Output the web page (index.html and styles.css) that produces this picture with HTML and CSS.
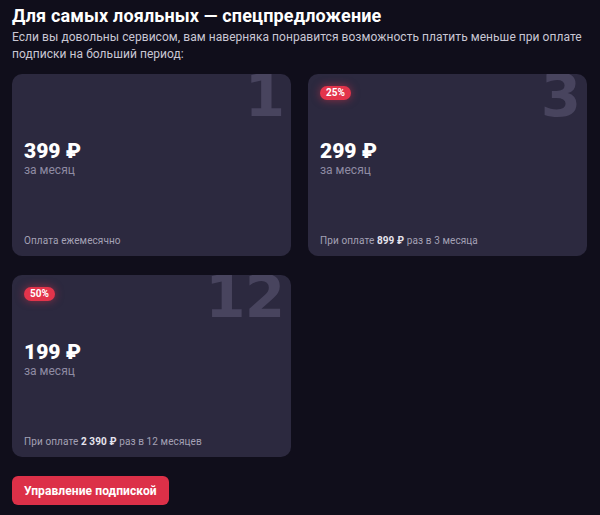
FILE: index.html
```html
<!DOCTYPE html>
<html lang="ru">
<head>
<meta charset="utf-8">
<link rel="stylesheet" href="styles.css">
</head>
<body>
<div class="page">
  <h1 class="title">Для самых лояльных — спецпредложение</h1>
  <p class="lead">Если вы довольны сервисом, вам наверняка понравится возможность платить меньше при оплате подписки на больший период:</p>
  <div class="plans">
    <div class="card">
      <div class="num">1</div>
      <div class="badge-row"></div>
      <div class="price">399 ₽</div>
      <div class="per">за месяц</div>
      <div class="foot">Оплата ежемесячно</div>
    </div>
    <div class="card">
      <div class="num">3</div>
      <div class="badge-row"><span class="badge">25%</span></div>
      <div class="price">299 ₽</div>
      <div class="per">за месяц</div>
      <div class="foot">При оплате <b>899 ₽</b> раз в 3 месяца</div>
    </div>
    <div class="card">
      <div class="num">12</div>
      <div class="badge-row"><span class="badge">50%</span></div>
      <div class="price">199 ₽</div>
      <div class="per">за месяц</div>
      <div class="foot">При оплате <b>2 390 ₽</b> раз в 12 месяцев</div>
    </div>
  </div>
  <button class="btn">Управление подпиской</button>
</div>
</body>
</html>
```
FILE: styles.css
```css
html, body {
  margin: 0;
  padding: 0;
  background: #100e1b;
}
body {
  font-family: Roboto, "Noto Sans", sans-serif;
  color: #ffffff;
}
.page {
  padding: 4px 12px 0 12px;
}
.title {
  margin: 0;
  font-size: 18px;
  line-height: 24px;
  font-weight: 700;
  letter-spacing: 0.15px;
}
.lead {
  margin: 1px 0 0 0;
  font-size: 12px;
  line-height: 17px;
  letter-spacing: 0.05px;
  color: #c9c7d4;
}
.plans {
  margin-top: 11px;
  display: grid;
  grid-template-columns: 279px 279px;
  column-gap: 17px;
  row-gap: 19px;
}
.card {
  position: relative;
  overflow: hidden;
  height: 182px;
  box-sizing: border-box;
  background: #2c293f;
  border-radius: 10px;
  padding: 12px 13px 8px 12px;
  display: flex;
  flex-direction: column;
}
.num {
  position: absolute;
  top: -12px;
  right: 7px;
  font-family: "DejaVu Sans", sans-serif;
  font-size: 58px;
  line-height: 68px;
  font-weight: 700;
  color: #48445e;
  letter-spacing: -1px;
}
.badge-row {
  height: 14px;
  display: flex;
  align-items: flex-start;
  position: relative;
}
.badge {
  display: block;
  height: 14px;
  line-height: 14px;
  padding: 0 6px;
  border-radius: 7px;
  background: #e3344b;
  font-size: 10px;
  font-weight: 700;
  color: #fff;
  box-shadow: 0 0 8px rgba(227, 52, 75, 0.55);
}
.price {
  margin-top: 39px;
  font-size: 21px;
  line-height: 24px;
  font-weight: 900;
  position: relative;
}
.per {
  font-size: 12px;
  line-height: 15px;
  color: #8f8ba3;
}
.foot {
  margin-top: auto;
  font-size: 10px;
  line-height: 14px;
  letter-spacing: 0.1px;
  color: #a4a1b5;
}
.foot b {
  font-weight: 700;
  color: #e6e4ee;
}
.btn {
  margin-top: 19px;
  height: 29px;
  padding: 0 12px;
  border: none;
  border-radius: 6px;
  background: #dc3048;
  color: #fff;
  font-family: Roboto, "Noto Sans", sans-serif;
  font-size: 12px;
  font-weight: 700;
  letter-spacing: 0.1px;
  cursor: pointer;
}
```
